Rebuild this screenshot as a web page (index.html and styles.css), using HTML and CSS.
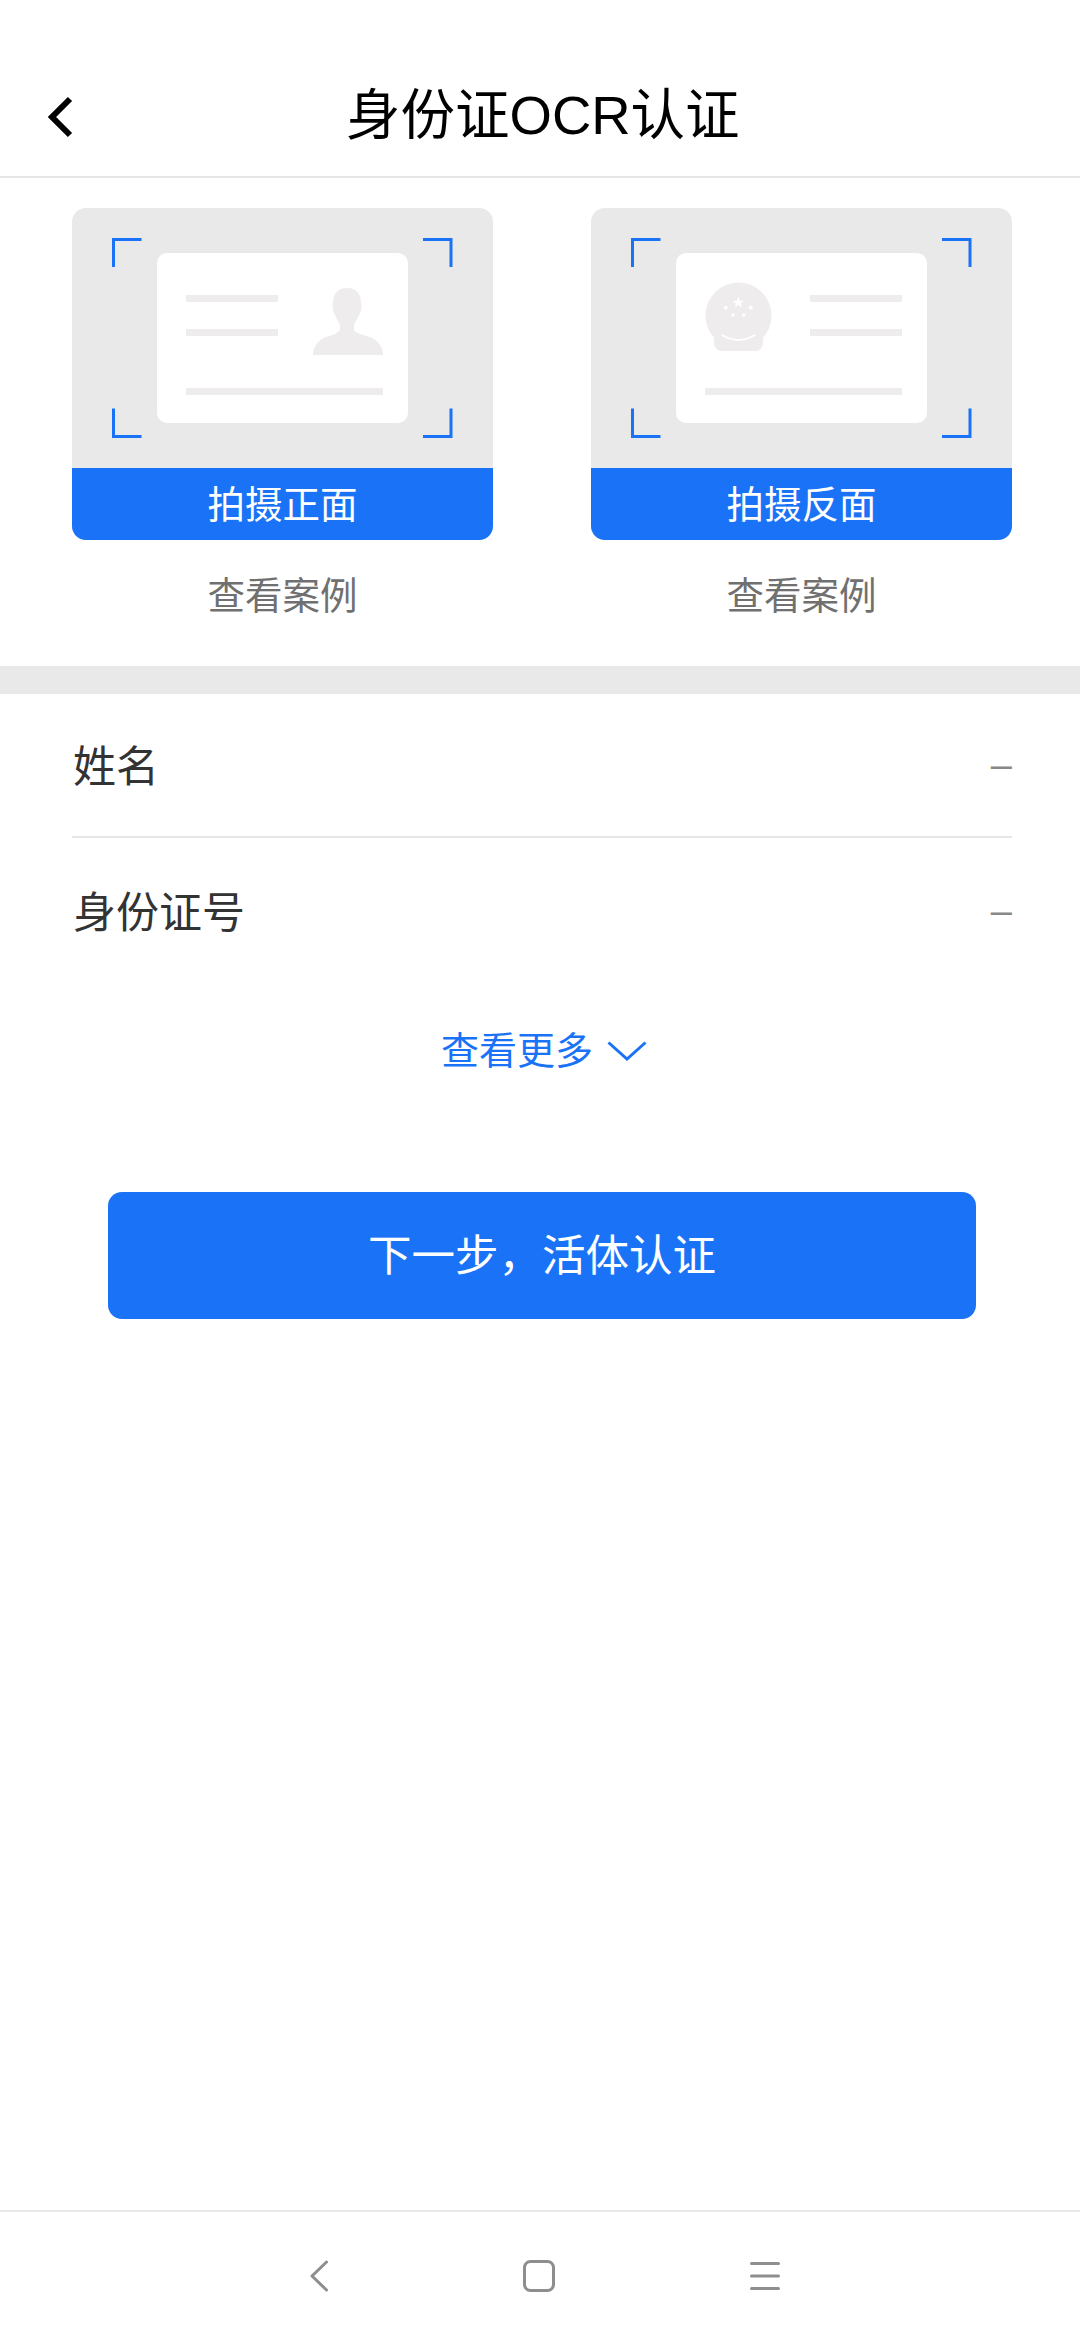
FILE: index.html
```html
<!DOCTYPE html>
<html lang="zh-CN">
<head>
    <meta charset="UTF-8" />
    <title>身份证OCR认证</title>
    <link rel="stylesheet" href="styles.css">
</head>
<body>
    <div class="page">
        <div class="header">
            <svg class="header-back" width="28" height="44" viewBox="0 0 28 44">
                <path d="M24 4L6 22l18 18" fill="none" stroke="#000" stroke-width="6" />
            </svg>
            <h1 class="header-title">身份证OCR认证</h1>
        </div>

        <div class="id-cards">
            <div class="id-item">
                <div class="id-card">
                    <svg class="id-pic" width="421" height="260" viewBox="0 0 421 260">
                        <path class="corner" d="M69.5 31.5H41.5V59M351 31.5h28v27.500M41.500 200.500v28h28M379 200.500v28h-28" />
                        <rect x="85" y="45" width="251" height="170" rx="10" fill="#fff" />
                        <rect class="bar" x="114" y="87" width="92" height="7" />
                        <rect class="bar" x="114" y="121" width="92" height="7" />
                        <rect class="bar" x="114" y="180" width="197" height="7" />
                        <path class="bar" d="M275 80C284 80 289 86 289 95C290 100 289 104 287 107C285 112 283 114 282 117L282 122C284 125 291 127 298 129C306 132 311 139 311 147L241 147C241 139 246 132 254 129C261 127 266 125 268 122L268 117C267 114 265 112 263 107C261 104 260 100 261 95C261 86 266 80 275 80Z" />
                    </svg>
                    <div class="id-btn">拍摄正面</div>
                </div>
                <div class="id-case">查看案例</div>
            </div>
            <div class="id-item">
                <div class="id-card">
                    <svg class="id-pic" width="421" height="260" viewBox="0 0 421 260">
                        <path class="corner" d="M69.5 31.5H41.5V59M351 31.5h28v27.500M41.500 200.500v28h28M379 200.500v28h-28" />
                        <rect x="85" y="45" width="251" height="170" rx="10" fill="#fff" />
                        <rect class="bar" x="219" y="87" width="92" height="7" />
                        <rect class="bar" x="219" y="121" width="92" height="7" />
                        <rect class="bar" x="114" y="180" width="197" height="7" />
                        <circle class="bar" cx="147.500" cy="107.500" r="33" />
                        <rect class="bar" x="123" y="122" width="49" height="21" rx="8" />
                        <path d="M147.300 88.500l1.500 4.200h4.400l-3.500 2.700 1.300 4.300-3.700-2.600-3.700 2.600 1.300-4.300-3.500-2.700h4.400z" fill="#fff" />
                        <circle cx="134.700" cy="99.700" r="2" fill="#fff" />
                        <circle cx="159.700" cy="99.700" r="2" fill="#fff" />
                        <circle cx="142" cy="107" r="1.800" fill="#fff" />
                        <circle cx="152.700" cy="107" r="1.800" fill="#fff" />
                        <path d="M131 127Q147.500 137 164 127" fill="none" stroke="#fff" stroke-width="2" />
                    </svg>
                    <div class="id-btn">拍摄反面</div>
                </div>
                <div class="id-case">查看案例</div>
            </div>
        </div>

        <div class="gap"></div>

        <div class="info">
            <div class="info-row info-row-line">
                <span class="info-name">姓名</span>
                <span class="info-val">–</span>
            </div>
            <div class="info-row">
                <span class="info-name">身份证号</span>
                <span class="info-val">–</span>
            </div>
        </div>

        <div class="more">
            <span>查看更多</span>
            <svg width="40" height="20" viewBox="0 0 40 20">
                <path d="M1.500 1.500L20 18 38.500 1.500" fill="none" stroke="#1a73f7" stroke-width="3" />
            </svg>
        </div>

        <div class="next">下一步，活体认证</div>

        <div class="navbar">
            <svg width="18" height="32" viewBox="0 0 18 32">
                <path d="M16.500 2L2 16l14.500 14" fill="none" stroke="#8e8e8e" stroke-width="3" stroke-linecap="round" stroke-linejoin="round" />
            </svg>
            <svg width="32" height="32" viewBox="0 0 32 32">
                <rect x="1.500" y="1.500" width="29" height="29" rx="6" fill="none" stroke="#8e8e8e" stroke-width="3" />
            </svg>
            <svg width="30" height="28" viewBox="0 0 30 28">
                <path d="M1.500 1.500h27M1.500 14h27M1.500 26.500h27" fill="none" stroke="#8e8e8e" stroke-width="3" stroke-linecap="round" />
            </svg>
        </div>
    </div>
</body>
</html>
```

FILE: styles.css
```css
body {
    margin: 0;
    background: #fff;
    font-family: "Liberation Sans", "Noto Sans CJK SC", sans-serif;
}

.page {
    display: flex;
    flex-direction: column;
    width: 1080px;
    height: 2340px;
    overflow: hidden;
}

.header {
    display: flex;
    align-items: center;
    height: 132px;
    padding: 44px 0 0 46px;
    box-sizing: content-box;
    border-bottom: 2px solid #e6e6e6;
}

.header-back {
    flex: none;
    margin-top: 14px;
}

.header-title {
    margin: 12px 0 0 272px;
    font-size: 54.5px;
    font-weight: 400;
    line-height: 70px;
    color: #000;
    white-space: nowrap;
}

.id-cards {
    display: flex;
    justify-content: space-between;
    padding: 30px 68px 45px 72px;
}

.id-item {
    width: 421px;
}

.id-card {
    overflow: hidden;
    background: #e9e9e9;
    border-radius: 14px;
}

.id-pic {
    display: block;
}

.corner {
    fill: none;
    stroke: #1a73f7;
    stroke-width: 3;
}

.bar {
    fill: #eeecec;
}

.id-btn {
    height: 72px;
    padding-top: 3px;
    box-sizing: border-box;
    background: #1a73f7;
    color: #fff;
    font-size: 37.5px;
    line-height: 69px;
    text-align: center;
}

.id-case {
    margin-top: 31px;
    color: #707070;
    font-size: 37.5px;
    line-height: 50px;
    text-align: center;
}

.gap {
    height: 28px;
    background: #e9e9e9;
}

.info {
    padding: 0 68px 0 72px;
}

.info-row {
    display: flex;
    justify-content: space-between;
    align-items: center;
    height: 146px;
    color: #333;
    font-size: 43px;
}

.info-row-line {
    height: 142px;
    border-bottom: 2px solid #e6e6e6;
}

.info-name {
    margin: 0 0 4px 1px;
}

.info-val {
    color: #888;
    font-size: 38px;
}

.more {
    display: flex;
    justify-content: center;
    align-items: center;
    gap: 14px;
    margin-top: 42px;
    padding-left: 8px;
    color: #1a73f7;
    font-size: 38px;
    line-height: 50px;
}

.next {
    height: 127px;
    margin: 116px 104px 0 108px;
    padding-top: 1px;
    box-sizing: border-box;
    background: #1a73f7;
    border-radius: 14px;
    color: #fff;
    font-size: 43.5px;
    line-height: 126px;
    text-align: center;
}

.navbar {
    display: flex;
    justify-content: center;
    align-items: center;
    gap: 195px;
    height: 128px;
    margin-top: auto;
    padding-left: 10px;
    border-top: 2px solid #e8e8e8;
}
```
